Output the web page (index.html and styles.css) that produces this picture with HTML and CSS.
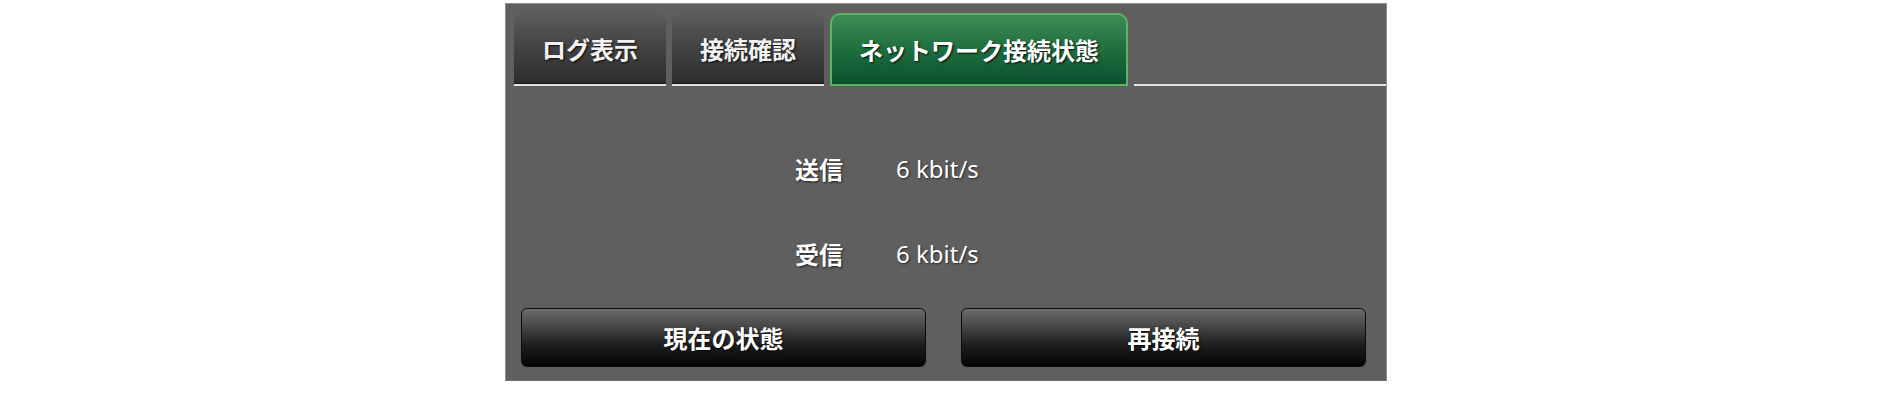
FILE: index.html
```html
<!DOCTYPE html>
<html lang="ja">
<head>
<meta charset="utf-8">
<title>ネットワーク接続状態</title>
<link rel="stylesheet" href="styles.css">
</head>
<body>
<div class="panel">
  <div class="tabbar">
    <div class="tab">ログ表示</div>
    <div class="tab">接続確認</div>
    <div class="tab active">ネットワーク接続状態</div>
    <div class="tabfill"></div>
  </div>
  <div class="stats">
    <div class="label">送信</div>
    <div class="value">6 kbit/s</div>
    <div class="label">受信</div>
    <div class="value">6 kbit/s</div>
  </div>
  <div class="actions">
    <button class="btn">現在の状態</button>
    <button class="btn">再接続</button>
  </div>
</div>
</body>
</html>
```

FILE: styles.css
```css
html, body {
  margin: 0;
  padding: 0;
  background: #ffffff;
}

body {
  font-family: "Noto Sans", "Noto Sans CJK JP", sans-serif;
}

.panel {
  margin: 3px 0 0 505px;
  width: 880px;
  background: #5f5f5f;
  border: 1px solid #8e8e8e;
  border-bottom-color: #6a6a6a;
  box-sizing: content-box;
}

.tabbar {
  display: flex;
  gap: 6px;
  padding: 9px 0 0 8px;
  height: 73px;
}

.tab {
  box-sizing: border-box;
  height: 73px;
  padding: 0 28px;
  display: flex;
  align-items: center;
  font-family: "Noto Sans CJK JP", sans-serif;
  font-weight: 700;
  font-size: 24px;
  color: #f2f2f2;
  text-shadow: 1px 1px 2px rgba(0, 0, 0, 0.85);
  background: linear-gradient(to bottom, #5c5c5c 0%, #474747 40%, #2c2c2c 100%);
  border-radius: 10px 10px 0 0;
  border-bottom: 2px solid #e4e4e4;
  box-shadow: inset 0 -1px 0 #141414;
}

.tab.active {
  color: #ffffff;
  background: linear-gradient(to bottom, #3e8c55 0%, #1f6e3e 50%, #0b5130 100%);
  border: 2px solid #5cb462;
  box-shadow: none;
  padding: 0 27px;
}

.tabfill {
  flex: 1;
  align-self: flex-end;
  height: 0;
  border-bottom: 2px solid #e4e4e4;
}

.stats {
  display: grid;
  grid-template-columns: 337px auto;
  grid-auto-rows: 85px;
  column-gap: 53px;
  align-items: center;
  padding-top: 40px;
}

.label {
  justify-self: end;
  font-family: "Noto Sans CJK JP", sans-serif;
  font-weight: 700;
  font-size: 24px;
  color: #ffffff;
  text-shadow: 1px 1px 2px rgba(0, 0, 0, 0.7);
}

.value {
  font-family: "Noto Sans", "Noto Sans CJK JP", sans-serif;
  font-size: 24px;
  color: #ffffff;
  text-shadow: 1px 1px 2px rgba(0, 0, 0, 0.6);
}

.actions {
  display: grid;
  grid-template-columns: 1fr 1fr;
  column-gap: 35px;
  padding: 12px 20px 13px 15px;
}

.btn {
  height: 59px;
  border: 1px solid #0c0c0c;
  border-radius: 6px;
  background: linear-gradient(to bottom, #6c6c6c 0%, #474747 30%, #1c1c1c 65%, #040404 100%);
  font-family: "Noto Sans CJK JP", sans-serif;
  font-weight: 700;
  font-size: 24px;
  color: #ffffff;
  text-shadow: 1px 1px 2px rgba(0, 0, 0, 0.8);
  padding: 0;
}
```
